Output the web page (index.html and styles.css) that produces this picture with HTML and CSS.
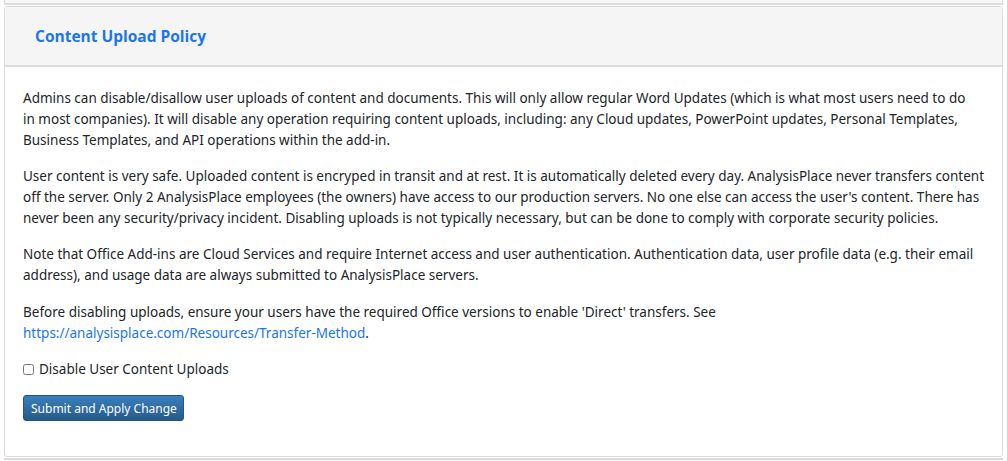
FILE: index.html
```html
<!DOCTYPE html>
<html>
<head>
<meta charset="utf-8">
<link rel="stylesheet" href="styles.css">
</head>
<body>
<div class="page">
  <div class="prev-panel"></div>
  <section class="panel">
    <header class="panel-heading">
      <h3 class="panel-title">Content Upload Policy</h3>
    </header>
    <div class="panel-body">
      <p>Admins can disable/disallow user uploads of content and documents. This will only allow regular Word Updates (which is what most users need to do<br>in most companies). It will disable any operation requiring content uploads, including: any Cloud updates, PowerPoint updates, Personal Templates,<br>Business Templates, and API operations within the add-in.</p>
      <p>User content is very safe. Uploaded content is encryped in transit and at rest. It is automatically deleted every day. AnalysisPlace never transfers content<br>off the server. Only 2 AnalysisPlace employees (the owners) have access to our production servers. No one else can access the user's content. There has<br>never been any security/privacy incident. Disabling uploads is not typically necessary, but can be done to comply with corporate security policies.</p>
      <p>Note that Office Add-ins are Cloud Services and require Internet access and user authentication. Authentication data, user profile data (e.g. their email<br>address), and usage data are always submitted to AnalysisPlace servers.</p>
      <p class="last-p">Before disabling uploads, ensure your users have the required Office versions to enable 'Direct' transfers. See<br><a href="#" class="link">https://analysisplace.com/Resources/Transfer-Method</a>.</p>
      <label class="check"><input type="checkbox" class="check-box"> Disable User Content Uploads</label>
      <button class="btn">Submit and Apply Change</button>
    </div>
  </section>
  <div class="next-panel"></div>
</div>
</body>
</html>
```
FILE: styles.css
```css
html, body {
  margin: 0;
  padding: 0;
  background: #fff;
}
body {
  font-family: "Noto Sans", "Open Sans", "DejaVu Sans", sans-serif;
  font-size: 13.5px;
  color: #212529;
}
.page {
  padding: 0 4px;
  display: flex;
  flex-direction: column;
}
.prev-panel {
  height: 3px;
  border: 1px solid #dcdcdc;
  border-top: none;
  border-bottom: 2px solid #dcdcdc;
  background: #f7f7f7;
}
.panel {
  margin-top: 1px;
  border: 1px solid #dcdcdc;
  border-radius: 3px;
  background: #fff;
}
.panel-heading {
  background: #f5f5f5;
  border-bottom: 2px solid #dcdcdc;
  height: 58px;
  display: flex;
  align-items: center;
  padding: 0 30px;
}
.panel-title {
  margin: 0;
  font-family: "Open Sans", "Noto Sans", sans-serif;
  font-size: 15.5px;
  font-weight: 700;
  color: #1a76f0;
  padding-top: 0;
}
.panel-body {
  padding: 21px 6px 35px 18px;
}
.panel-body p {
  margin: 0 0 15px;
  line-height: 21px;
  white-space: nowrap;
}
.panel-body p.last-p {
  margin-top: 16px;
}
.link {
  color: #1a76f0;
  text-decoration: none;
}
.check {
  display: flex;
  align-items: center;
  gap: 5px;
  line-height: 21px;
  margin-top: 14px;
}
.check-box {
  margin: 0;
  width: 11px;
  height: 11px;
}
.btn {
  margin-top: 15px;
  display: block;
  font-family: "Noto Sans", "Open Sans", sans-serif;
  font-size: 12px;
  white-space: nowrap;
  color: #fff;
  background: linear-gradient(#3a7fbd, #265a88);
  border: 1px solid #245580;
  border-radius: 3px;
  padding: 0 7px;
  height: 26px;
  width: 161px;
}
.next-panel {
  margin-top: 1px;
  height: 10px;
  border-top: 2px solid #dcdcdc;
  background: #f5f5f5;
}
```
